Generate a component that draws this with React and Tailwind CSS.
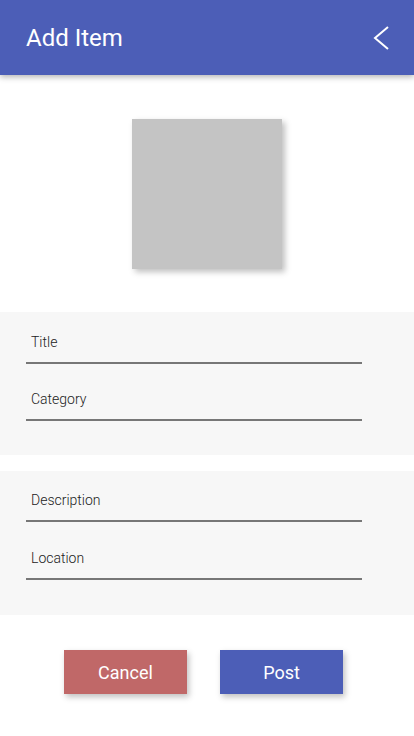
import React from 'react';

const Field = ({ label, className = '' }) => (
  <div className={`w-[336px] border-b-2 border-[#777777] pb-[10px] ${className}`}>
    <div className="pl-[5px] text-[14px] font-light leading-[20px] text-[#222222]">{label}</div>
  </div>
);

const App = () => {
  return (
    <div className="min-h-[736px] bg-white font-['Roboto',sans-serif]">
      <header className="relative z-10 flex h-[75px] items-center justify-between bg-[#4c5eb7] pl-[26px] pr-[24px] shadow-[0_2px_6px_rgba(0,0,0,0.3)]">
        <h1 className="text-[24px] font-normal text-white">Add Item</h1>
        <button className="text-white">
          <svg width="18" height="24" viewBox="0 0 18 24" fill="none" stroke="currentColor" strokeWidth="2">
            <path d="M16 1 L3 12 L16 23" />
          </svg>
        </button>
      </header>

      <div className="flex justify-center pt-[44px] pb-[43px]">
        <div className="h-[150px] w-[150px] bg-[#c4c4c4] shadow-[3px_3px_6px_rgba(0,0,0,0.25)]" />
      </div>

      <section className="h-[143px] bg-[#f7f7f7] px-[26px] pt-[20px]">
        <Field label="Title" />
        <Field label="Category" className="mt-[25px]" />
      </section>

      <section className="mt-[16px] h-[144px] bg-[#f7f7f7] px-[26px] pt-[19px]">
        <Field label="Description" />
        <Field label="Location" className="mt-[26px]" />
      </section>

      <div className="flex gap-[33px] pl-[64px] pt-[35px]">
        <button className="h-[44px] w-[123px] bg-[#c06868] text-[18px] text-white shadow-[2px_3px_6px_rgba(0,0,0,0.25)]">
          Cancel
        </button>
        <button className="h-[44px] w-[123px] bg-[#4c5eb7] text-[18px] text-white shadow-[2px_3px_6px_rgba(0,0,0,0.25)]">
          Post
        </button>
      </div>
    </div>
  );
};

export default App;
